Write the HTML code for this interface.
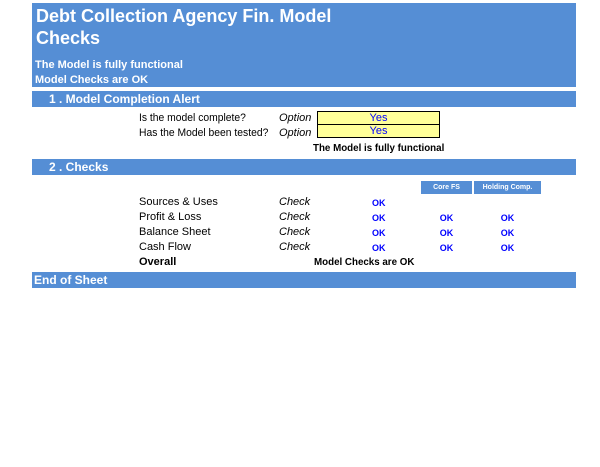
<!DOCTYPE html>
<html><head><style>
body{margin:0;width:600px;height:467px;background:#fff;position:relative;font-family:"Liberation Sans",sans-serif;overflow:hidden}
.a{position:absolute;white-space:nowrap}
.blue{background:#558ed5;color:#fff;font-weight:bold}
.ok{color:#0000ff;font-weight:bold;font-size:9px}
.ok2{color:#0000ff;font-size:9px;font-weight:bold;text-align:center}
.lbl{font-size:11px;color:#000}
.q{font-size:11px;transform:scaleX(0.94);transform-origin:left}
.it{font-style:italic;font-size:11px}
</style></head><body>
<div class="a blue" style="left:32px;top:3px;width:544px;height:84px"></div>
<div class="a" style="left:36px;top:5px;font-size:18px;font-weight:bold;color:#fff;line-height:22px">Debt Collection Agency Fin. Model<br>Checks</div>
<div class="a" style="left:35px;top:58px;font-size:11px;font-weight:bold;color:#fff;line-height:15px">The Model is fully functional<br>Model Checks are OK</div>

<div class="a blue" style="left:32px;top:91px;width:544px;height:16px;font-size:12px;line-height:16px"><span style="padding-left:17px">1 . Model Completion Alert</span></div>
<div class="a q" style="left:139px;top:112px">Is the model complete?</div>
<div class="a q" style="left:139px;top:127px">Has the Model been tested?</div>
<div class="a it" style="left:279px;top:112px">Option</div>
<div class="a it" style="left:279px;top:127px">Option</div>
<div class="a" style="left:317px;top:111px;width:121px;height:12px;background:#ffff99;border:1px solid #000;color:#0000ff;font-size:11px;text-align:center;line-height:12px">Yes</div>
<div class="a" style="left:317px;top:124px;width:121px;height:12px;background:#ffff99;border:1px solid #000;color:#0000ff;font-size:11px;text-align:center;line-height:12px">Yes</div>
<div class="a" style="left:313px;top:142px;font-size:10.5px;font-weight:bold;transform:scaleX(0.93);transform-origin:left">The Model is fully functional</div>

<div class="a blue" style="left:32px;top:159px;width:544px;height:16px;font-size:12px;line-height:16px"><span style="padding-left:17px">2 . Checks</span></div>
<div class="a blue" style="left:421px;top:181px;width:51px;height:13px;font-size:7px;line-height:13px;text-align:center">Core FS</div>
<div class="a blue" style="left:474px;top:181px;width:67px;height:13px;font-size:7px;line-height:13px;text-align:center">Holding Comp.</div>

<div class="a lbl" style="left:139px;top:196px">Sources &amp; Uses</div>
<div class="a lbl" style="left:139px;top:211px">Profit &amp; Loss</div>
<div class="a lbl" style="left:139px;top:226px">Balance Sheet</div>
<div class="a lbl" style="left:139px;top:241px">Cash Flow</div>
<div class="a lbl" style="left:139px;top:256px;font-weight:bold">Overall</div>
<div class="a it" style="left:279px;top:196px">Check</div>
<div class="a it" style="left:279px;top:211px">Check</div>
<div class="a it" style="left:279px;top:226px">Check</div>
<div class="a it" style="left:279px;top:241px">Check</div>
<div class="a ok" style="left:372px;top:198px">OK</div>
<div class="a ok" style="left:372px;top:213px">OK</div>
<div class="a ok" style="left:372px;top:228px">OK</div>
<div class="a ok" style="left:372px;top:243px">OK</div>
<div class="a ok2" style="left:421px;top:213px;width:51px">OK</div>
<div class="a ok2" style="left:421px;top:228px;width:51px">OK</div>
<div class="a ok2" style="left:421px;top:243px;width:51px">OK</div>
<div class="a ok2" style="left:474px;top:213px;width:67px">OK</div>
<div class="a ok2" style="left:474px;top:228px;width:67px">OK</div>
<div class="a ok2" style="left:474px;top:243px;width:67px">OK</div>
<div class="a" style="left:314px;top:256px;font-size:10.5px;font-weight:bold;transform:scaleX(0.93);transform-origin:left">Model Checks are OK</div>

<div class="a blue" style="left:32px;top:272px;width:544px;height:16px;font-size:12px;line-height:16px"><span style="padding-left:2px">End of Sheet</span></div>
</body></html>
